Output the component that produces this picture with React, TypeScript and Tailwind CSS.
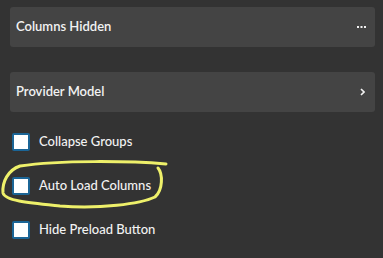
import { useState } from "react";

const options = ["Collapse Groups", "Auto Load Columns", "Hide Preload Button"];

const Checkbox = ({ label }: { label: string }) => {
  const [checked, setChecked] = useState(false);
  return (
    <label className="flex h-[44px] items-center gap-[9px] pl-[12px]">
      <span
        onClick={() => setChecked(!checked)}
        className="flex h-[18px] w-[18px] items-center justify-center rounded-[2px] border-[2.5px] border-[#1b6596] bg-white"
      >
        {checked && <span className="h-[8px] w-[8px] bg-[#1b6596]" />}
      </span>
      <span className="text-[13px] font-medium text-[#f2f2f2]">{label}</span>
    </label>
  );
};

export default function App() {
  return (
    <div
      className="relative h-[258px] w-[383px] overflow-hidden bg-[#333333] pt-[7px] pl-[10px] pr-[8px]"
      style={{ fontFamily: "Lato, 'Open Sans', sans-serif" }}
    >
      <div className="flex h-[40px] items-center justify-between rounded-[3px] bg-[#444444] pl-[6px] pr-[9px]">
        <span className="text-[13px] font-semibold text-[#f2f2f2]">Columns Hidden</span>
        <svg width="9" height="3" viewBox="0 0 9 3">
          <rect x="0" y="0" width="2" height="2" fill="#f2f2f2" />
          <rect x="3.5" y="0" width="2" height="2" fill="#f2f2f2" />
          <rect x="7" y="0" width="2" height="2" fill="#f2f2f2" />
        </svg>
      </div>

      <div className="mt-[25px] flex h-[40px] items-center justify-between rounded-[3px] bg-[#444444] pl-[6px] pr-[10px]">
        <span className="text-[13px] font-semibold text-[#f2f2f2]">Provider Model</span>
        <svg width="5" height="8" viewBox="0 0 5 8">
          <path d="M1 1 L4 4 L1 7" stroke="#f2f2f2" strokeWidth="1.6" fill="none" />
        </svg>
      </div>

      <div className="-ml-[10px] mt-[8px] flex flex-col">
        {options.map((o) => (
          <Checkbox key={o} label={o} />
        ))}
      </div>

      {/* hand drawn highlight */}
      <svg className="pointer-events-none absolute left-0 top-0" width="383" height="258">
        <path
          d="M166 164 C130 161 60 160 20 166 C8 170 2 182 3 193 C5 201 30 203 60 206 C100 209 140 204 155 197 C163 190 163 174 158 168"
          stroke="#eef06a"
          strokeWidth="3"
          strokeLinecap="round"
          fill="none"
        />
      </svg>
    </div>
  );
}
